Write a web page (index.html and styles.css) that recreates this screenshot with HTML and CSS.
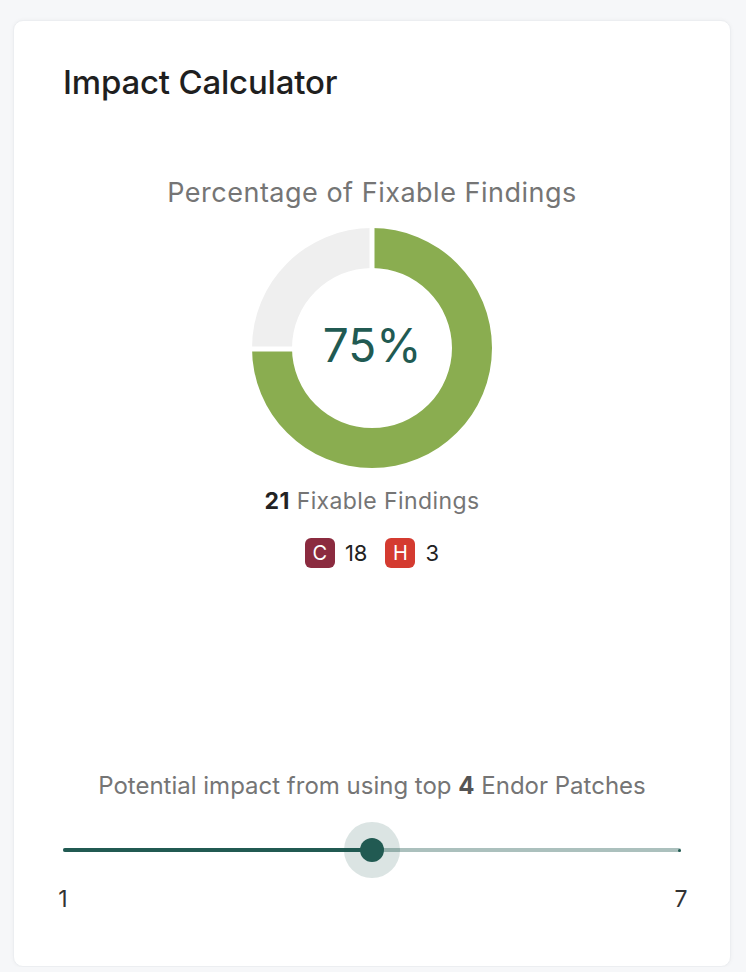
FILE: index.html
```html
<!DOCTYPE html>
<html lang="en">
<head>
<meta charset="utf-8">
<title>Impact Calculator</title>
<link rel="stylesheet" href="styles.css">
</head>
<body>
<div class="card">
  <h2 class="title">Impact Calculator</h2>
  <div class="chart-section">
    <div class="subtitle">Percentage of Fixable Findings</div>
    <div class="donut">
      <svg width="240" height="240" viewBox="0 0 240 240">
        <path d="M 120 0 A 120 120 0 1 1 0 120 L 40 120 A 80 80 0 1 0 120 40 Z" fill="#8aad50"/>
        <path d="M 0 120 A 120 120 0 0 1 120 0 L 120 40 A 80 80 0 0 0 40 120 Z" fill="#efefef"/>
        <line x1="120" y1="-2" x2="120" y2="42" stroke="#fff" stroke-width="5"/>
        <line x1="-2" y1="121" x2="42" y2="121" stroke="#fff" stroke-width="5"/>
      </svg>
      <div class="donut-value">75%</div>
    </div>
    <div class="count"><b>21</b> Fixable Findings</div>
    <div class="badges">
      <span class="badge badge-c">C</span><span class="badge-num">18</span>
      <span class="badge badge-h">H</span><span class="badge-num">3</span>
    </div>
  </div>
  <div class="slider-section">
    <div class="slider-label">Potential impact from using top <b>4</b> Endor Patches</div>
    <div class="slider">
      <div class="rail"></div>
      <div class="track" style="width:50%"></div>
      <div class="mark mark-end"></div>
      <div class="thumb" style="left:50%"></div>
    </div>
    <div class="mark-labels">
      <span class="mark-label">1</span>
      <span class="mark-label">7</span>
    </div>
  </div>
</div>
</body>
</html>
```

FILE: styles.css
```css
* { box-sizing: border-box; }
html, body { margin: 0; }
body {
  background: #f6f7f9;
  padding: 20px 15px 0 13px;
  font-family: Inter, "Noto Sans", sans-serif;
}
.card {
  width: 718px;
  height: 947px;
  background: #fff;
  border: 1px solid #eceef1;
  border-radius: 10px;
  box-shadow: 0 0 4px rgba(0, 0, 0, 0.04);
  padding: 41px 49px 53px;
  display: flex;
  flex-direction: column;
}
.title {
  margin: 0;
  font-size: 33px;
  line-height: 40px;
  font-weight: 500;
  color: #1f1f1f;
  letter-spacing: -0.2px;
}
.chart-section {
  margin-top: 75px;
  display: flex;
  flex-direction: column;
  align-items: center;
}
.subtitle {
  font-size: 27px;
  line-height: 32px;
  letter-spacing: 0.5px;
  color: #757575;
}
.donut {
  position: relative;
  width: 240px;
  height: 240px;
  margin-top: 19px;
}
.donut svg { display: block; overflow: visible; }
.donut-value {
  position: absolute;
  inset: 0;
  padding-bottom: 6px;
  display: flex;
  align-items: center;
  justify-content: center;
  font-size: 46px;
  color: #215a52;
  font-weight: 400;
}
.count {
  margin-top: 19px;
  font-size: 23px;
  line-height: 28px;
  letter-spacing: 0.4px;
  color: #757575;
}
.count b { color: #222; font-weight: 700; }
.badges {
  margin-top: 23px;
  display: flex;
  align-items: center;
  height: 30px;
}
.badge {
  width: 30px;
  height: 30px;
  border-radius: 6px;
  color: #fff;
  font-size: 20px;
  display: flex;
  align-items: center;
  justify-content: center;
}
.badge-c { background: #8b2b3f; }
.badge-h { background: #d43b30; margin-left: 18px; }
.badge-num {
  margin-left: 10px;
  font-size: 22px;
  color: #222;
}
.slider-section {
  margin-top: auto;
  display: flex;
  flex-direction: column;
}
.slider-label {
  text-align: center;
  font-size: 24px;
  line-height: 28px;
  color: #757575;
}
.slider-label b { color: #555; font-weight: 700; }
.slider {
  position: relative;
  height: 56px;
  margin-top: 22px;
}
.rail, .track {
  position: absolute;
  left: 0;
  top: 26px;
  height: 4px;
  border-radius: 2px;
}
.rail { width: 100%; background: rgba(33, 90, 82, 0.38); }
.track { background: #215a52; }
.mark {
  position: absolute;
  top: 26.5px;
  width: 3px;
  height: 3px;
  border-radius: 50%;
  background: #215a52;
}
.mark-end { right: 0; }
.thumb {
  position: absolute;
  top: 16px;
  width: 24px;
  height: 24px;
  margin-left: -12px;
  border-radius: 50%;
  background: #215a52;
  box-shadow: 0 0 0 16px rgba(33, 90, 82, 0.16);
}
.mark-labels {
  margin-top: 7px;
  display: flex;
  justify-content: space-between;
}
.mark-label {
  width: 0;
  display: flex;
  justify-content: center;
  white-space: nowrap;
  font-size: 23px;
  line-height: 28px;
  color: #333;
}
```
